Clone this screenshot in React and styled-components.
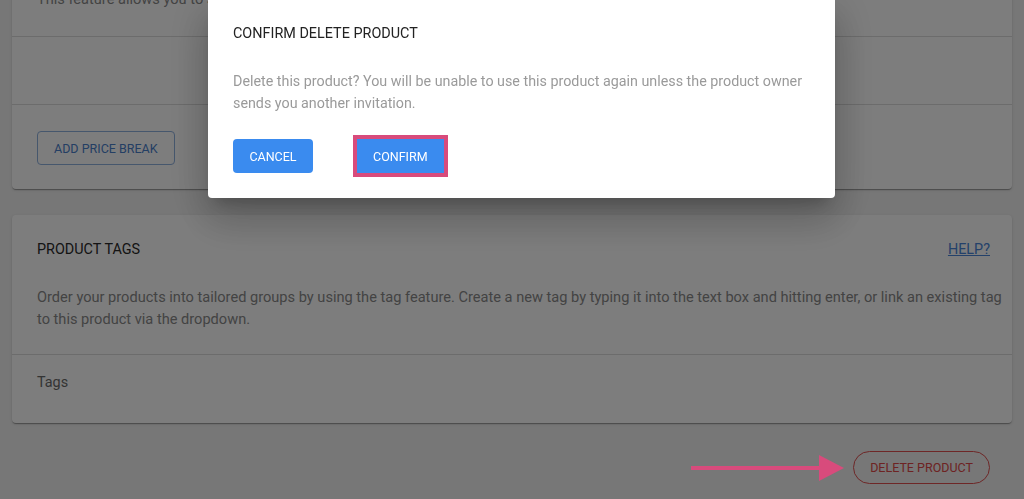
import React from "react";
import styled, { createGlobalStyle } from "styled-components";

const GlobalStyle = createGlobalStyle`
  html, body {
    margin: 0;
    padding: 0;
    background-color: #f2f2f2;
    font-family: Roboto, "Liberation Sans", Arial, sans-serif;
    overflow: hidden;
  }
`;

const App = () => {
  return (
    <>
      <GlobalStyle />
      <Page>
        <Card>
          <Description $top>
            This feature allows you to set price breaks for this product based on the quantity ordered by your customers.
          </Description>
          <Divider />
          <EmptySection />
          <Divider />
          <ButtonSection>
            <OutlineButton>ADD PRICE BREAK</OutlineButton>
          </ButtonSection>
        </Card>

        <Card $spaced>
          <CardHeader>
            <CardTitle>PRODUCT TAGS</CardTitle>
            <HelpLink href="#">HELP?</HelpLink>
          </CardHeader>
          <Description>
            Order your products into tailored groups by using the tag feature. Create a new tag by typing it into the text box and hitting enter, or link an existing tag to this product via the dropdown.
          </Description>
          <Divider />
          <TagsSection>Tags</TagsSection>
        </Card>

        <Footer>
          <Arrow width="153" height="28" viewBox="0 0 153 28">
            <rect x="0" y="12" width="132" height="4" fill="#d84b7c" />
            <polygon points="128,1 153,14 128,27" fill="#d84b7c" />
          </Arrow>
          <DeleteButton>DELETE PRODUCT</DeleteButton>
        </Footer>
      </Page>

      <Overlay />

      <Modal>
        <ModalTitle>CONFIRM DELETE PRODUCT</ModalTitle>
        <ModalText>
          Delete this product? You will be unable to use this product again unless the product owner sends you another invitation.
        </ModalText>
        <ModalActions>
          <FilledButton>CANCEL</FilledButton>
          <Highlight>
            <FilledButton $wide>CONFIRM</FilledButton>
          </Highlight>
        </ModalActions>
      </Modal>
    </>
  );
};
export default App;

const Page = styled.div`
  display: flex;
  flex-direction: column;
  padding: 0 12px;
  margin-top: -40px;
`;

const Card = styled.div`
  background-color: #ffffff;
  border-radius: 4px;
  box-shadow: 0 2px 1px -1px rgba(0, 0, 0, 0.2), 0 1px 1px 0 rgba(0, 0, 0, 0.14),
    0 1px 3px 0 rgba(0, 0, 0, 0.12);
  margin-top: ${({ $spaced }) => ($spaced ? "26px" : "0")};
`;

const CardHeader = styled.div`
  display: flex;
  justify-content: space-between;
  align-items: center;
  padding: 25px 22px 0 25px;
  line-height: 20px;
`;

const CardTitle = styled.div`
  font-size: 14.4px;
  color: #2a2a2a;
`;

const HelpLink = styled.a`
  font-size: 14.4px;
  color: #4a86d8;
  text-decoration: underline;
`;

const Description = styled.p`
  margin: 0;
  padding: ${({ $top }) => ($top ? "28px 4px 26px 25px" : "26px 4px 24px 25px")};
  font-size: 14.6px;
  line-height: 22px;
  color: #8a8a8a;
  white-space: ${({ $top }) => ($top ? "nowrap" : "normal")};
  overflow: hidden;
`;

const Divider = styled.div`
  height: 1px;
  background-color: #dcdcdc;
`;

const EmptySection = styled.div`
  height: 67px;
`;

const ButtonSection = styled.div`
  padding: 26px 25px 24px;
  display: flex;
`;

const OutlineButton = styled.button`
  height: 34px;
  padding: 0 16px;
  border: 1px solid #8fb1df;
  border-radius: 4px;
  background: transparent;
  color: #4a80cc;
  font-family: inherit;
  font-size: 12.5px;
  font-weight: 400;
`;

const TagsSection = styled.div`
  padding: 18px 25px 30px;
  font-size: 14.4px;
  line-height: 20px;
  color: #6a6a6a;
`;

const Footer = styled.div`
  display: flex;
  justify-content: flex-end;
  align-items: center;
  gap: 9px;
  margin-top: 28px;
  padding-right: 22px;
`;

const Arrow = styled.svg`
  position: relative;
  z-index: 20;
  display: block;
`;

const DeleteButton = styled.button`
  height: 33px;
  padding: 0 16px;
  border: 1px solid #e05050;
  border-radius: 17px;
  background: transparent;
  color: #e04848;
  font-family: inherit;
  font-size: 12.5px;
  font-weight: 400;
`;

const Overlay = styled.div`
  position: fixed;
  inset: 0;
  background-color: rgba(0, 0, 0, 0.51);
  z-index: 10;
`;

const Modal = styled.div`
  position: fixed;
  top: 0;
  left: 208px;
  width: 627px;
  box-sizing: border-box;
  padding: 24px 25px 25px;
  background-color: #ffffff;
  border-radius: 0 0 4px 4px;
  box-shadow: 0 11px 15px -7px rgba(0, 0, 0, 0.2), 0 24px 38px 3px rgba(0, 0, 0, 0.14),
    0 9px 46px 8px rgba(0, 0, 0, 0.12);
  z-index: 15;
`;

const ModalTitle = styled.div`
  font-size: 14.4px;
  line-height: 20px;
  color: #222222;
`;

const ModalText = styled.p`
  margin: 26px 0 0;
  font-size: 14.3px;
  line-height: 22px;
  color: #9a9a9a;
`;

const ModalActions = styled.div`
  display: flex;
  align-items: center;
  gap: 40px;
  margin-top: 25px;
`;

const FilledButton = styled.button`
  height: 34px;
  min-width: ${({ $wide }) => ($wide ? "85px" : "80px")};
  padding: 0 16px;
  border: none;
  border-radius: ${({ $wide }) => ($wide ? "0" : "4px")};
  background-color: #3a8bef;
  color: #ffffff;
  font-family: inherit;
  font-size: 12.5px;
  font-weight: 400;
`;

const Highlight = styled.div`
  display: flex;
  border: 4px solid #d84b7c;
  margin: -4px 0;
`;
